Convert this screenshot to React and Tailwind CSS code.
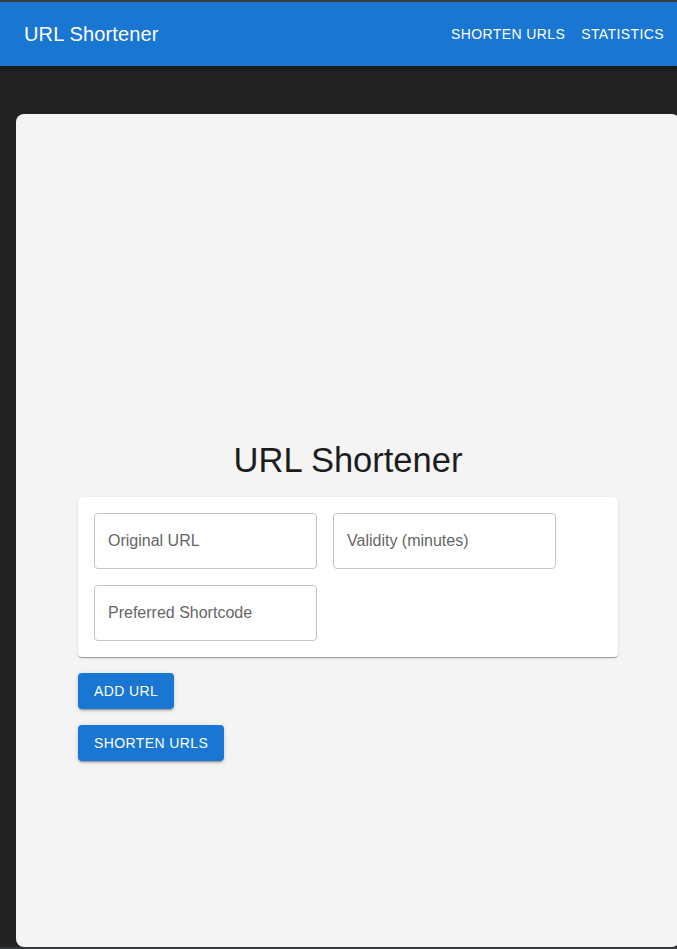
import React from "react";

const font = { fontFamily: '"Liberation Sans", Arial, sans-serif' };

function Field({ label }) {
  return (
    <div className="w-[223px] h-[56px] border border-[#c4c4c4] rounded-[4px] bg-white flex items-center px-[13px]">
      <span className="text-[16px] text-[#666666]">{label}</span>
    </div>
  );
}

function Button({ children }) {
  return (
    <button className="h-[36px] px-4 rounded-[4px] bg-[#1976d2] text-white text-[14px] font-medium tracking-[0.4px] uppercase shadow-[0_3px_1px_-2px_rgba(0,0,0,0.2),0_2px_2px_0_rgba(0,0,0,0.14),0_1px_5px_0_rgba(0,0,0,0.12)]">
      {children}
    </button>
  );
}

export default function App() {
  return (
    <div className="h-[949px] w-[677px] overflow-hidden bg-[#222222] flex flex-col" style={font}>
      {/* top strip */}
      <div className="h-[2px] bg-[#3c3c3c]" />

      {/* App bar */}
      <header className="h-[64px] bg-[#1976d2] text-white flex items-center justify-between pl-6 pr-[5px] shadow-[0_2px_4px_-1px_rgba(0,0,0,0.2),0_4px_5px_0_rgba(0,0,0,0.14)]">
        <div className="text-[20px] font-medium tracking-[0.15px]">URL Shortener</div>
        <nav className="flex items-center">
          <span className="px-2 py-[6px] text-[14px] font-medium tracking-[0.4px]">SHORTEN URLS</span>
          <span className="px-2 py-[6px] text-[14px] font-medium tracking-[0.4px]">STATISTICS</span>
        </nav>
      </header>

      {/* Main */}
      <main className="flex-1 pt-[48px] pl-4">
        <div className="w-[664px] h-[833px] bg-[#f4f4f4] rounded-lg pt-[325px]">
          <div className="w-[540px] mx-auto">
            <h1 className="text-[34.5px] leading-[42px] text-[#1c1c1c] text-center mb-4">URL Shortener</h1>

            <div className="bg-white rounded-[4px] p-4 shadow-[0_2px_1px_-1px_rgba(0,0,0,0.2),0_1px_1px_0_rgba(0,0,0,0.14),0_1px_3px_0_rgba(0,0,0,0.12)]">
              <div className="flex flex-wrap gap-4 w-[462px]">
                <Field label="Original URL" />
                <Field label="Validity (minutes)" />
                <Field label="Preferred Shortcode" />
              </div>
            </div>

            <div className="flex flex-col items-start gap-4 mt-4">
              <Button>Add URL</Button>
              <Button>Shorten URLs</Button>
            </div>
          </div>
        </div>
      </main>

      {/* bottom strip */}
      <div className="h-[2px] bg-[#2c3a3c]" />
    </div>
  );
}
